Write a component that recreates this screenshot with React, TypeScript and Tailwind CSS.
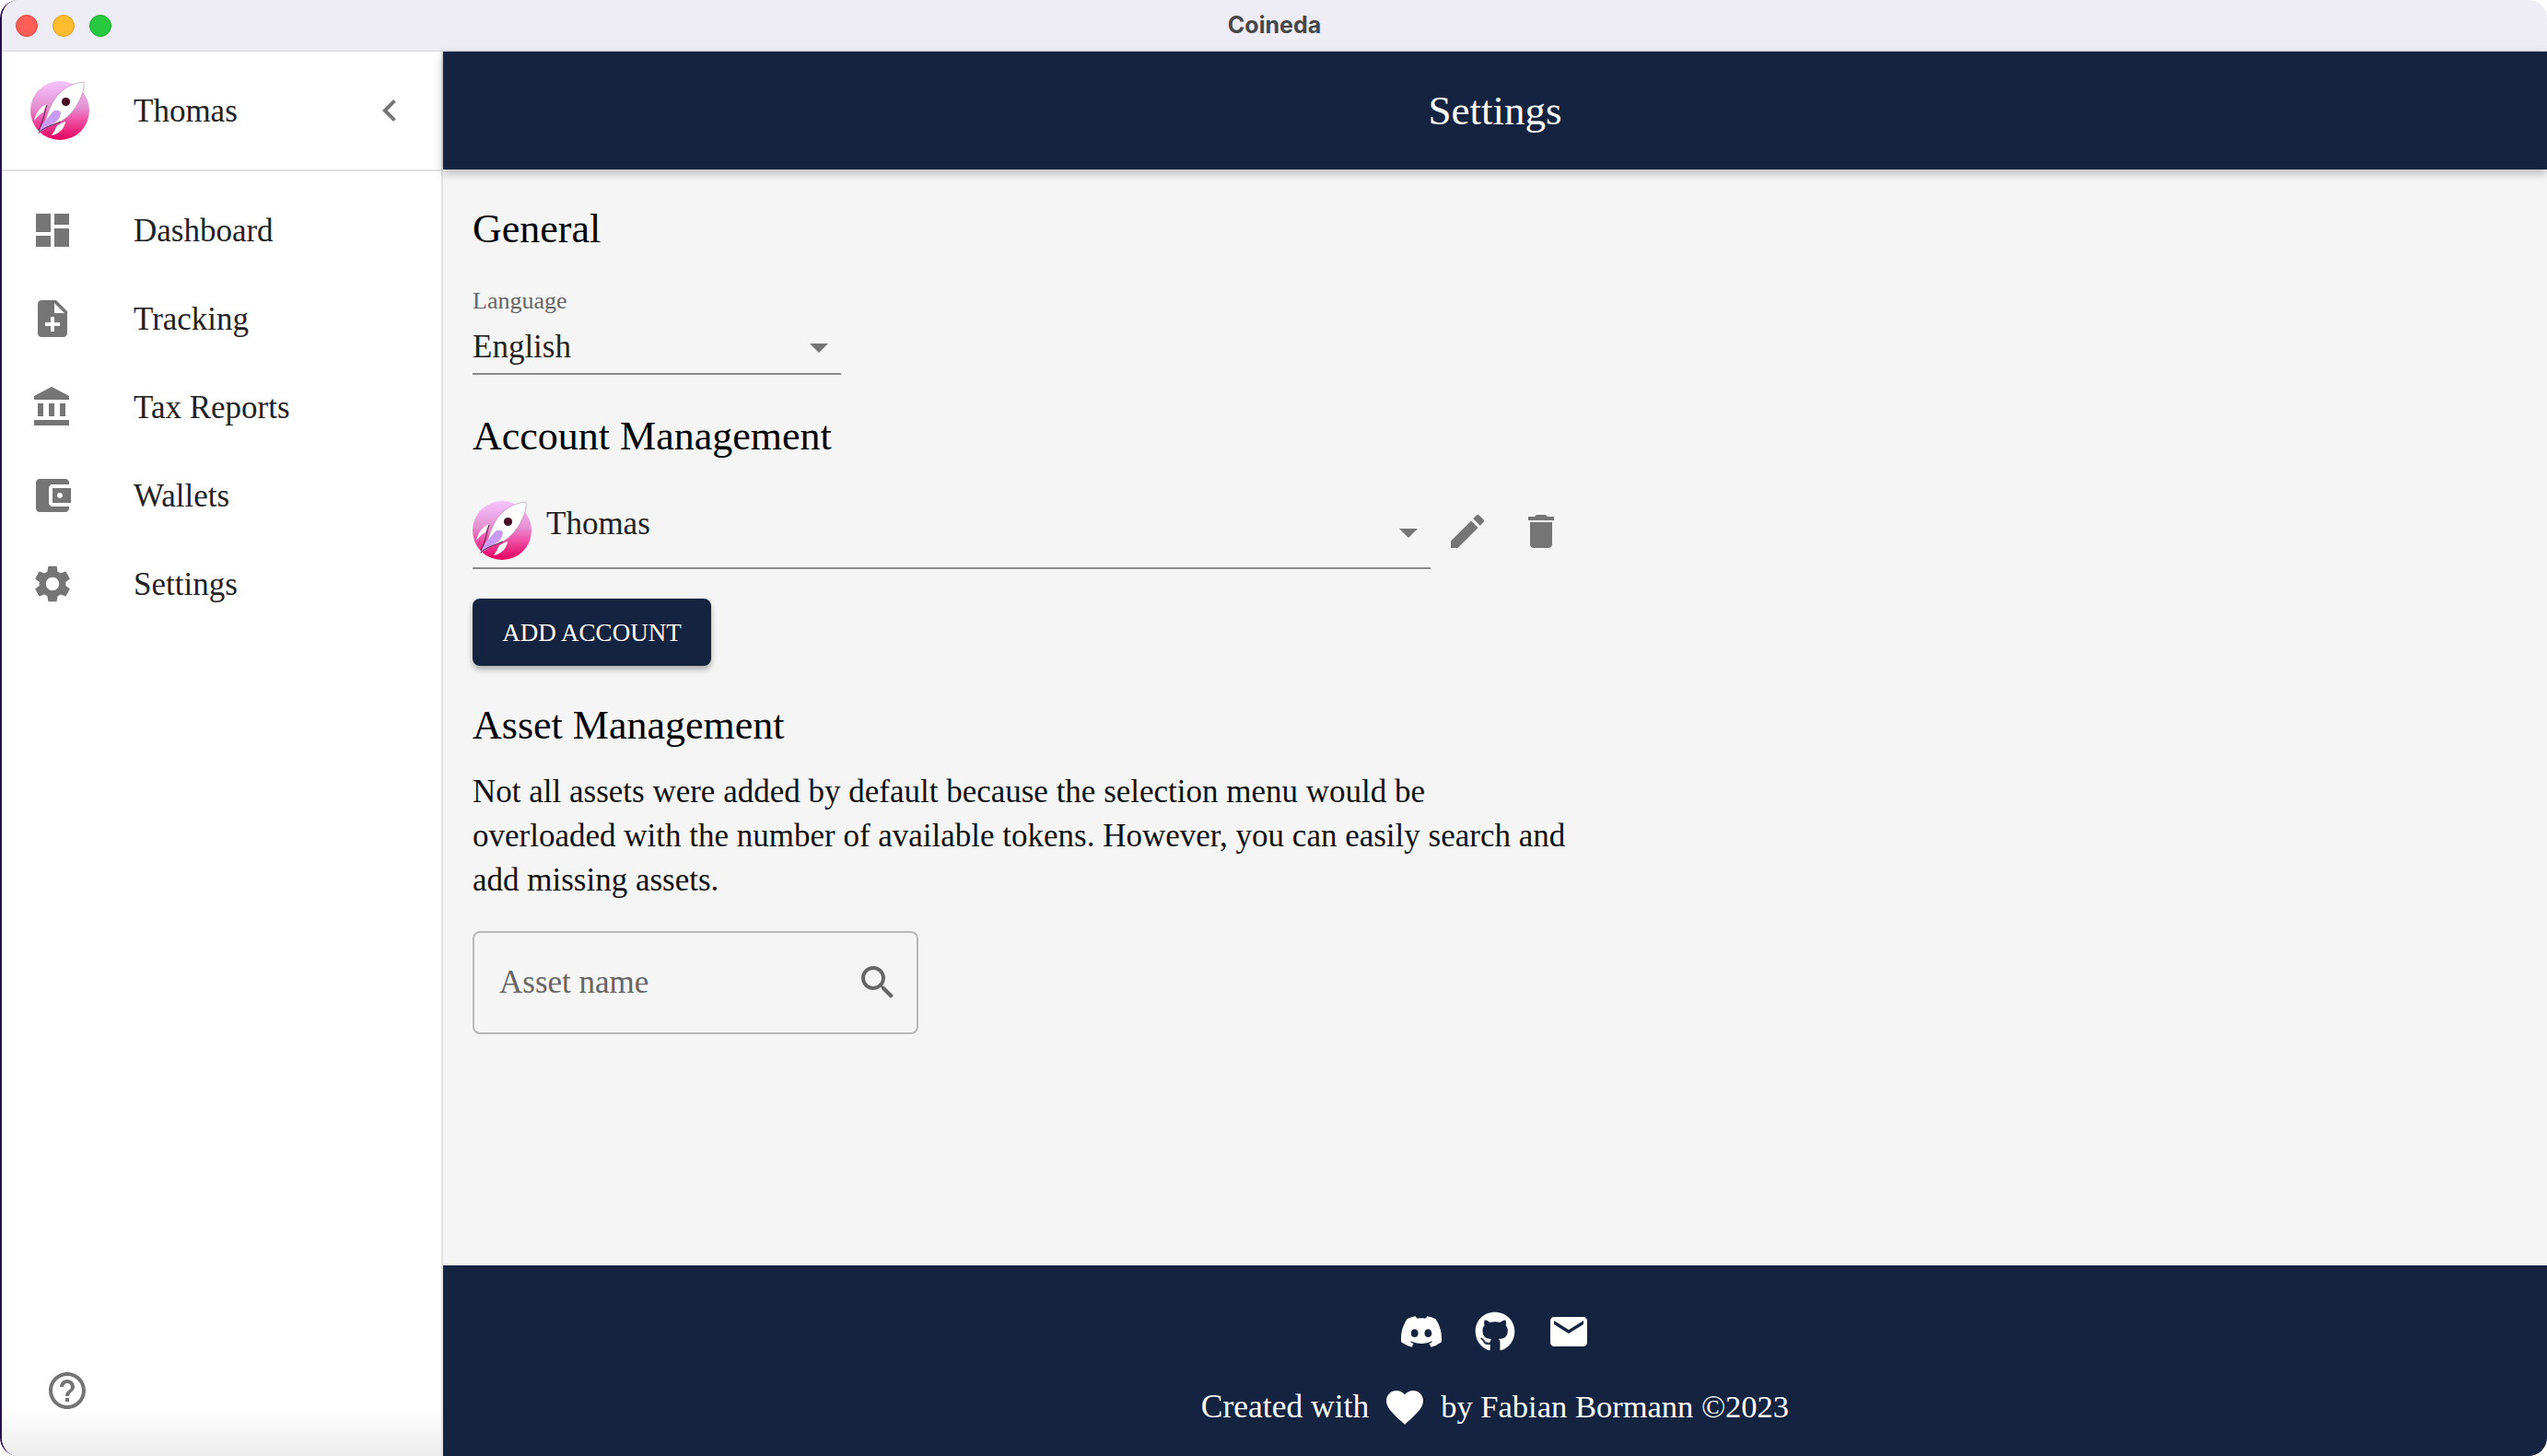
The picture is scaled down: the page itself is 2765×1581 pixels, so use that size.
import { FaDiscord, FaGithub } from "react-icons/fa"

const serif = "font-['Liberation_Serif',serif]"

const icons = {
  dashboard: "M3 13h8V3H3v10zm0 8h8v-6H3v6zm10 0h8V11h-8v10zm0-18v6h8V3h-8z",
  noteAdd: "M14 2H6c-1.1 0-1.99.9-1.99 2L4 20c0 1.1.89 2 1.99 2H18c1.1 0 2-.9 2-2V8l-6-6zm2 14h-3v3h-2v-3H8v-2h3v-3h2v3h3v2zm-3-7V3.5L18.5 9H13z",
  bank: "M4 10v7h3v-7H4zm6 0v7h3v-7h-3zM2 22h19v-3H2v3zm14-12v7h3v-7h-3zm-4.5-9L2 6v2h19V6l-9.5-5z",
  wallet: "M21 18v1c0 1.1-.9 2-2 2H5c-1.11 0-2-.9-2-2V5c0-1.1.89-2 2-2h14c1.1 0 2 .9 2 2v1h-9c-1.11 0-2 .9-2 2v8c0 1.1.89 2 2 2h9zm-9-2h10V8H12v8zm4-2.5c-.83 0-1.5-.67-1.5-1.5s.67-1.5 1.5-1.5 1.5.67 1.5 1.5-.67 1.5-1.5 1.5z",
  settings: "M19.14 12.94c.04-.3.06-.61.06-.94 0-.32-.02-.64-.07-.94l2.03-1.58c.18-.14.23-.41.12-.61l-1.92-3.32c-.12-.22-.37-.29-.59-.22l-2.39.96c-.5-.38-1.03-.7-1.62-.94l-.36-2.54c-.04-.24-.24-.41-.48-.41h-3.84c-.24 0-.43.17-.47.41l-.36 2.54c-.59.24-1.13.57-1.62.94l-2.39-.96c-.22-.08-.47 0-.59.22L2.74 8.87c-.12.21-.08.47.12.61l2.03 1.58c-.05.3-.09.63-.09.94s.02.64.07.94l-2.03 1.58c-.18.14-.23.41-.12.61l1.92 3.32c.12.22.37.29.59.22l2.39-.96c.5.38 1.03.7 1.62.94l.36 2.54c.05.24.24.41.48.41h3.84c.24 0 .44-.17.47-.41l.36-2.54c.59-.24 1.13-.56 1.62-.94l2.39.96c.22.08.47 0 .59-.22l1.92-3.32c.12-.22.07-.47-.12-.61l-2.01-1.58zM12 15.6c-1.98 0-3.6-1.62-3.6-3.6s1.62-3.6 3.6-3.6 3.6 1.62 3.6 3.6-1.62 3.6-3.6 3.6z",
  chevronLeft: "M15.41 7.41 14 6l-6 6 6 6 1.41-1.41L10.83 12z",
  arrowDrop: "M7 10l5 5 5-5z",
  edit: "M3 17.25V21h3.75L17.81 9.94l-3.75-3.75L3 17.25zM20.71 7.04c.39-.39.39-1.02 0-1.41l-2.34-2.34a.9959.9959 0 0 0-1.41 0l-1.83 1.83 3.75 3.75 1.83-1.83z",
  trash: "M6 19c0 1.1.9 2 2 2h8c1.1 0 2-.9 2-2V7H6v12zM19 4h-3.5l-1-1h-5l-1 1H5v2h14V4z",
  search: "M15.5 14h-.79l-.28-.27C15.41 12.59 16 11.11 16 9.5 16 5.91 13.09 3 9.5 3S3 5.91 3 9.5 5.91 16 9.5 16c1.61 0 3.09-.59 4.23-1.57l.27.28v.79l5 4.99L20.49 19l-4.99-5zm-6 0C7.01 14 5 11.99 5 9.5S7.01 5 9.5 5 14 7.01 14 9.5 11.99 14 9.5 14z",
  help: "M11 18h2v-2h-2v2zm1-16C6.48 2 2 6.48 2 12s4.48 10 10 10 10-4.48 10-10S17.52 2 12 2zm0 18c-4.41 0-8-3.59-8-8s3.59-8 8-8 8 3.59 8 8-3.59 8-8 8zm0-14c-2.21 0-4 1.79-4 4h2c0-1.1.9-2 2-2s2 .9 2 2c0 2-3 1.75-3 5h2c0-2.25 3-2.5 3-5 0-2.21-1.79-4-4-4z",
  mail: "M20 4H4c-1.1 0-1.99.9-1.99 2L2 18c0 1.1.9 2 2 2h16c1.1 0 2-.9 2-2V6c0-1.1-.9-2-2-2zm0 4l-8 5-8-5V6l8 5 8-5v2z",
  heart: "M12 21.35l-1.45-1.32C5.4 15.36 2 12.28 2 8.5 2 5.42 4.42 3 7.5 3c1.74 0 3.41.81 4.5 2.09C13.09 3.81 14.76 3 16.5 3 19.58 3 22 5.42 22 8.5c0 3.78-3.4 6.86-8.55 11.54L12 21.35z",
}

const navItems = [
  { label: "Dashboard", icon: icons.dashboard },
  { label: "Tracking", icon: icons.noteAdd },
  { label: "Tax Reports", icon: icons.bank },
  { label: "Wallets", icon: icons.wallet },
  { label: "Settings", icon: icons.settings },
]

function Icon({ d, className }: { d: string; className?: string }) {
  return (
    <svg viewBox="0 0 24 24" fill="currentColor" className={className}>
      <path d={d} />
    </svg>
  )
}

function RocketAvatar({ id }: { id: string }) {
  return (
    <svg viewBox="0 0 64 64" className="h-16 w-16 shrink-0 overflow-visible">
      <defs>
        <linearGradient id={id} x1="0" y1="0" x2="0" y2="1">
          <stop offset="0" stopColor="#f6c4ff" />
          <stop offset="0.45" stopColor="#e48fd0" />
          <stop offset="0.65" stopColor="#ef54a8" />
          <stop offset="1" stopColor="#e6005f" />
        </linearGradient>
      </defs>
      <circle cx="32" cy="32" r="32" fill={`url(#${id})`} />
      <path d="M58 1C47 2 37 7 30 15C23 23 20 32 17 41C14 47 11 52 8 57C16 50 24 48 33 44C43 38 50 29 55 17C57 12 59 6 58 1Z" fill="#fff" stroke="#b98aa8" strokeWidth="0.6" />
      <path d="M26 32C30 31 33 32 33 35C32 41 28 45 22 48C17 51 13 54 9 56C11 49 14 44 18 41C21 38 23 34 26 32Z" fill="#c79cf2" />
      <path d="M18 25C11 28 6 34 4 43C8 38 11 35 14 34C15 31 16 28 18 25Z" fill="#fff" />
      <path d="M38 44C33 46 30 47 28 50C27 53 25 56 23 59C29 58 34 54 36 50C37 48 38 46 38 44Z" fill="#fff" />
      <path d="M18 26C15 34 15 41 9 54M9 56C15 50 24 48 33 44" fill="none" stroke="#4a1030" strokeWidth="0.9" />
      <circle cx="38.5" cy="22.5" r="4.6" fill="#4a0e24" />
    </svg>
  )
}

function Sidebar() {
  return (
    <aside className="flex w-[479px] shrink-0 flex-col border-r-2 border-[#e0e0e0] bg-white">
      <div className="flex h-[130px] shrink-0 items-center border-b-2 border-[#e0e0e0] pl-[31px]">
        <RocketAvatar id="sidebar-avatar" />
        <span className="ml-12 flex-1 pt-[2px] text-[35px] text-[#222]">Thomas</span>
        <Icon d={icons.chevronLeft} className="mr-[32px] h-12 w-12 text-[#757575]" />
      </div>
      <nav className="flex flex-1 flex-col py-[16px]">
        {navItems.map((item) => (
          <div key={item.label} className="flex h-24 items-center pl-[31px]">
            <Icon d={item.icon} className="h-12 w-12 shrink-0 text-[#757575]" />
            <span className="ml-[64px] pt-[2px] text-[35px] text-[#222]">{item.label}</span>
          </div>
        ))}
      </nav>
      <div className="flex h-[95px] shrink-0 items-start bg-gradient-to-b from-white from-[46%] to-[#ececec] pl-[47px]">
        <Icon d={icons.help} className="h-12 w-12 text-[#757575]" />
      </div>
    </aside>
  )
}

function SettingsContent() {
  return (
    <main className="flex-1 bg-[#f5f5f5] pl-8 pt-[40px]">
      <h2 className="text-[44px] leading-[50px] text-black">General</h2>
      <div className="mt-[38px] w-[400px]">
        <div className="text-[26px] leading-[30px] text-[#666]">Language</div>
        <div className="mt-[7px] flex h-[58px] items-center justify-between border-b-2 border-[#8c8c8c]">
          <span className="text-[35px] text-[#222]">English</span>
          <Icon d={icons.arrowDrop} className="h-12 w-12 text-[#757575]" />
        </div>
      </div>
      <h2 className="mt-[42px] text-[44px] leading-[50px] text-black">Account Management</h2>
      <div className="mt-[45px] flex items-start">
        <div className="flex h-[74px] w-[1040px] items-start border-b-2 border-[#8c8c8c]">
          <RocketAvatar id="account-avatar" />
          <span className="ml-4 flex-1 text-[35px] leading-[50px] text-[#222]">Thomas</span>
          <Icon d={icons.arrowDrop} className="mt-[10px] h-12 w-12 text-[#757575]" />
        </div>
        <Icon d={icons.edit} className="ml-4 mt-[9px] h-12 w-12 text-[#757575]" />
        <Icon d={icons.trash} className="ml-8 mt-[9px] h-12 w-12 text-[#757575]" />
      </div>
      <button className="mt-[32px] flex h-[73px] w-[259px] items-center justify-center rounded-lg bg-[#14233f] pt-[2px] text-[27px] text-white shadow-[0_4px_6px_rgba(0,0,0,0.3)]">
        ADD ACCOUNT
      </button>
      <h2 className="mt-[40px] text-[44px] leading-[50px] text-black">Asset Management</h2>
      <p className="mt-[23px] w-[1192px] text-[35px] leading-[48px] text-[#111]">
        Not all assets were added by default because the selection menu would be overloaded with the number of available tokens. However, you can easily search and add missing assets.
      </p>
      <div className="mt-[31px] flex h-[112px] w-[484px] items-center justify-between rounded-lg border-2 border-[#b8b8b8] pl-[27px] pr-[18px]">
        <span className="text-[35px] text-[#666]">Asset name</span>
        <Icon d={icons.search} className="h-12 w-12 text-[#666]" />
      </div>
    </main>
  )
}

function Footer() {
  return (
    <footer className="flex h-[207px] shrink-0 flex-col items-center bg-[#14233f] pt-[48px] text-white">
      <div className="flex items-center gap-[34px]">
        <FaDiscord className="h-12 w-12" />
        <FaGithub className="h-[44px] w-[44px]" />
        <Icon d={icons.mail} className="h-12 w-12" />
      </div>
      <div className="mt-[31px] flex items-center">
        <span className="text-[35.5px]">Created with</span>
        <Icon d={icons.heart} className="mx-[15px] h-12 w-12" />
        <span className="text-[34.5px]">by Fabian Bormann ©2023</span>
      </div>
    </footer>
  )
}

export default function App() {
  return (
    <div className={`flex h-[1581px] w-[2765px] flex-col overflow-hidden rounded-[20px] border-l-2 border-[#2b0a5a] bg-white ${serif}`}>
      <div className="relative flex h-[56px] shrink-0 items-center justify-center border-b border-[#d8d6df] bg-[#eeecf5]">
        <div className="absolute left-[15px] top-[16px] flex gap-[16px]">
          <span className="h-6 w-6 rounded-full border border-[#e0443e] bg-[#ff5f57]" />
          <span className="h-6 w-6 rounded-full border border-[#dea123] bg-[#febc2e]" />
          <span className="h-6 w-6 rounded-full border border-[#1aab29] bg-[#28c840]" />
        </div>
        <span className="font-['Inter',sans-serif] text-[25px] font-bold text-[#474747]">Coineda</span>
      </div>
      <div className="flex min-h-0 flex-1">
        <Sidebar />
        <div className="flex min-w-0 flex-1 flex-col">
          <header className="z-10 flex h-[128px] shrink-0 items-center justify-center bg-[#14233f] pt-[2px] text-[45px] text-white shadow-[0_4px_10px_rgba(0,0,0,0.25)]">
            Settings
          </header>
          <SettingsContent />
          <Footer />
        </div>
      </div>
    </div>
  )
}
